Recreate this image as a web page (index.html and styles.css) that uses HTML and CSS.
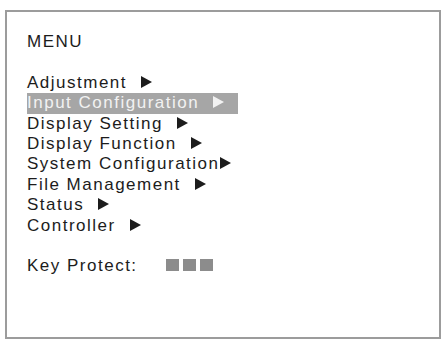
FILE: index.html
```html
<!DOCTYPE html>
<html lang="en">
<head>
  <meta charset="UTF-8">
  <title>Menu</title>
  <link rel="stylesheet" href="styles.css">
</head>
<body>
  <div class="screen">
    <div class="title">MENU</div>

    <ul class="menu">
      <li><span class="item">Adjustment<span class="arrow"></span></span></li>
      <li><span class="item selected">Input Configuration<span class="arrow"></span></span></li>
      <li><span class="item">Display Setting<span class="arrow"></span></span></li>
      <li><span class="item">Display Function<span class="arrow"></span></span></li>
      <li><span class="item">System Configuration<span class="arrow tight"></span></span></li>
      <li><span class="item">File Management<span class="arrow"></span></span></li>
      <li><span class="item">Status<span class="arrow"></span></span></li>
      <li><span class="item">Controller<span class="arrow"></span></span></li>
    </ul>

    <div class="key-protect">
      Key Protect:
      <span class="blocks">
        <span class="block"></span><span class="block"></span><span class="block"></span>
      </span>
    </div>
  </div>
</body>
</html>
```

FILE: styles.css
```css
body {
  margin: 0;
  background-color: #fff;
  font-family: 'Liberation Sans', Arial, Helvetica, sans-serif;
  font-size: 17px;
  line-height: 20.4px;
  letter-spacing: 1.5px;
  color: #1c1c1c;
}

.screen {
  margin: 10px 1px 0 5px;
  border: 2px solid #9c9c9c;
  padding: 20px 0 0 20px;
  box-sizing: border-box;
  height: 329px;
}

.title {
  margin-bottom: 20.4px;
}

.menu {
  list-style: none;
  margin: 0 0 20.4px 0;
  padding: 0;
}

.item {
  display: inline-block;
}

.item.selected {
  background-color: #a6a6a6;
  color: #f2f2f2;
  padding-right: 14px;
}

.arrow {
  display: inline-block;
  width: 0;
  height: 0;
  margin-left: 14px;
  border-left: 11px solid #1c1c1c;
  border-top: 6px solid transparent;
  border-bottom: 6px solid transparent;
}

.arrow.tight {
  margin-left: 0;
}

.selected .arrow {
  border-left-color: #f2f2f2;
}

.blocks {
  display: inline-flex;
  gap: 4px;
  margin-left: 22px;
}

.block {
  width: 13px;
  height: 12px;
  background-color: #8c8c8c;
}
```
